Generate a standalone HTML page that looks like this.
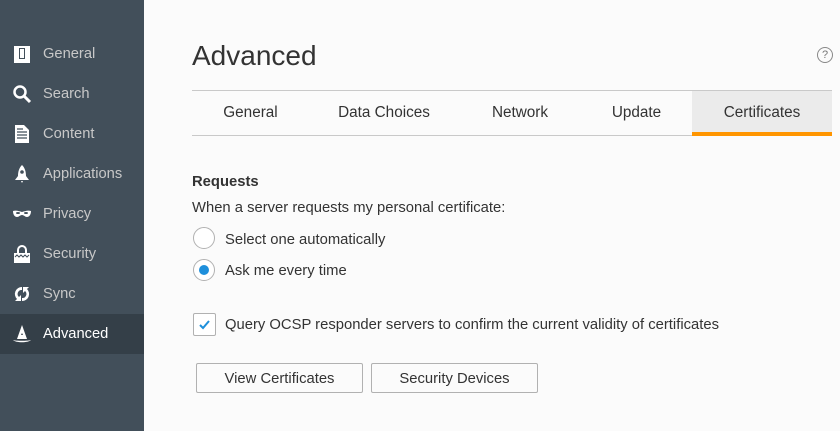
<!DOCTYPE html>
<html><head><style>
*{margin:0;padding:0;box-sizing:border-box}
body{width:840px;height:431px;overflow:hidden;background:#fbfbfb;font-family:"Liberation Sans",sans-serif;position:relative;color:#333}
#side{position:absolute;left:0;top:0;width:144px;height:431px;background:#424f5a}
.it{position:absolute;left:0;width:144px;height:40px;color:#c8c8c8;font-size:14.7px;line-height:41px;padding-left:43px}
.it.sel{background:#343f48;color:#fff}
.it svg{position:absolute;left:12px;top:10px;width:20px;height:20px}
.abs{position:absolute}
h1{position:absolute;left:192px;top:40px;font-size:28px;font-weight:normal;color:#333}
#tabs{position:absolute;left:192px;top:90px;width:640px;height:46px;border-top:1px solid #c9c9c9;border-bottom:1px solid #c9c9c9}
.tab{position:absolute;top:0;height:44px;line-height:43px;font-size:15.3px;color:#333;text-align:center}
.t{font-size:14.8px;color:#333;position:absolute}
.radio{position:absolute;left:193px;width:22px;height:22px;border-radius:50%;border:1px solid #b1b1b1;background:#fff}
.btn{position:absolute;top:363px;height:30px;border:1px solid #b1b1b1;background:#fbfbfb;font-size:14.8px;line-height:31px;text-align:center;color:#333;border-radius:2px}
</style></head><body>
<div id="side">
<div class="it" style="top:34px"><svg viewBox="0 0 20 20"><rect x="2" y="2" width="16" height="17" fill="#fff"/><rect x="7" y="4" width="6" height="11" fill="#424f5a"/><rect x="8" y="5" width="4" height="9" fill="#fff"/></svg>General</div>
<div class="it" style="top:74px"><svg viewBox="0 0 20 20"><circle cx="8" cy="8" r="5.5" fill="none" stroke="#fff" stroke-width="2.5"/><path d="M12 12l6 6" stroke="#fff" stroke-width="3"/></svg>Search</div>
<div class="it" style="top:114px"><svg viewBox="0 0 20 20"><path d="M3 1h9l5 5v13H3z" fill="#fff"/><path d="M5 8h10M5 11h10M5 14h10M5 5h6" stroke="#424f5a" stroke-width="1.3"/></svg>Content</div>
<div class="it" style="top:154px"><svg viewBox="0 0 20 20"><path d="M10 1C7 4 6 8 6 12l-3 4h14l-3-4c0-4-1-8-4-11z" fill="#fff"/><circle cx="10" cy="8" r="1.8" fill="#424f5a"/><path d="M9 17h2l-1 2z" fill="#fff"/></svg>Applications</div>
<div class="it" style="top:194px"><svg viewBox="0 0 20 20"><path d="M1 7c3-1 6 0 9 1 3-1 6-2 9-1 0 4-2 6-4 6s-3-2-5-2-3 2-5 2-4-2-4-6z" fill="#fff"/><ellipse cx="6" cy="9" rx="2" ry="1" fill="#424f5a"/><ellipse cx="14" cy="9" rx="2" ry="1" fill="#424f5a"/></svg>Privacy</div>
<div class="it" style="top:234px"><svg viewBox="0 0 20 20"><path d="M6 9V6a4 4 0 018 0v3" fill="none" stroke="#fff" stroke-width="2"/><rect x="2" y="9" width="16" height="10" fill="#fff"/><path d="M3 13l2-2 2 2 2-2 2 2 2-2 2 2 2-2" stroke="#424f5a" fill="none"/></svg>Security</div>
<div class="it" style="top:274px"><svg viewBox="0 0 20 20"><path d="M10 3a7 7 0 00-5 12l-2 2h6v-6l-2 2a4 4 0 013-7zM10 17a7 7 0 005-12l2-2h-6v6l2-2a4 4 0 01-3 7z" fill="#fff"/></svg>Sync</div>
<div class="it sel" style="top:314px"><svg viewBox="0 0 20 20"><path d="M10 1L5 15h10z" fill="#fff"/><path d="M1 16c3 3 15 3 18 0-3 1-15 1-18 0z" fill="#fff"/><path d="M10 9l1 2h-2z" fill="#343f48"/></svg>Advanced</div>
</div>
<h1>Advanced</h1>
<div class="abs" style="left:817px;top:47px;width:16px;height:16px;border:1px solid #888;border-radius:50%;font-size:11px;line-height:14px;text-align:center;color:#777">?</div>
<div id="tabs">
<div class="tab" style="left:0;width:117px">General</div>
<div class="tab" style="left:117px;width:150px">Data Choices</div>
<div class="tab" style="left:267px;width:122px">Network</div>
<div class="tab" style="left:389px;width:111px">Update</div>
<div class="tab" style="left:500px;width:140px;background:#ebebeb;border-bottom:4px solid #ff9500;height:45px">Certificates</div>
</div>
<div class="t" style="left:192px;top:174px;font-weight:bold;color:#333">Requests</div>
<div class="t" style="left:192px;top:200px">When a server requests my personal certificate:</div>
<div class="radio" style="top:227px"></div>
<div class="t" style="left:225px;top:232px">Select one automatically</div>
<div class="radio" style="top:259px"><div style="position:absolute;left:5px;top:5px;width:10px;height:10px;border-radius:50%;background:#1e8fdb"></div></div>
<div class="t" style="left:225px;top:263px">Ask me every time</div>
<div class="abs" style="left:193px;top:313px;width:23px;height:23px;border:1px solid #b1b1b1;background:#fff;border-radius:2px"><svg width="21" height="21" viewBox="0 0 21 21"><path d="M6 11l3 3 6-7" fill="none" stroke="#1e8fdb" stroke-width="2"/></svg></div>
<div class="t" style="left:225px;top:317px">Query OCSP responder servers to confirm the current validity of certificates</div>
<div class="btn" style="left:196px;width:167px">View Certificates</div>
<div class="btn" style="left:371px;width:167px">Security Devices</div>
</body></html>
